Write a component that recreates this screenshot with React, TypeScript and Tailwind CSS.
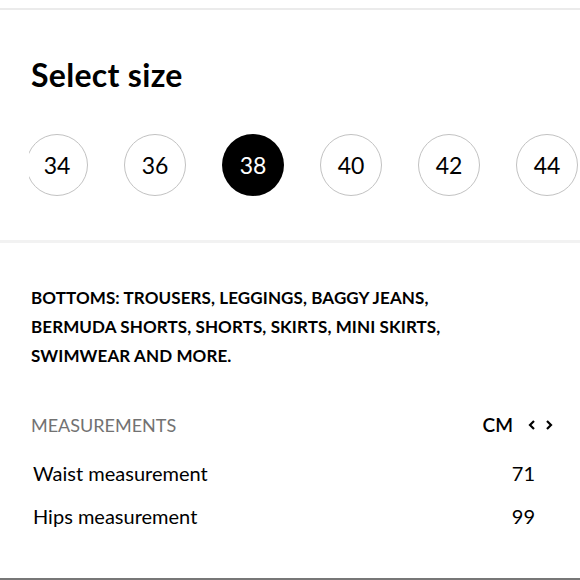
import React, { useState } from 'react';

const sizes = ['34', '36', '38', '40', '42', '44'];

const rows = [
  { label: 'Waist measurement', value: '71' },
  { label: 'Hips measurement', value: '99' },
];

const font = { fontFamily: 'Lato, "Liberation Sans", sans-serif' };

const App: React.FC = () => {
  const [selected, setSelected] = useState('38');

  return (
    <div className="w-[580px] h-[580px] bg-white overflow-hidden flex flex-col text-black" style={font}>
      <div className="h-[8px]" />
      <div className="h-[2px] bg-[#ebebeb]" />

      {/* size picker */}
      <div className="pt-[46px] pb-[44px]">
        <h2 className="pl-[31px] text-[32px] leading-[38px] font-bold tracking-[0.3px]">Select size</h2>
        <div className="mt-[40px] ml-[29px] overflow-hidden">
          <div className="flex gap-[36px] -ml-[3px]">
            {sizes.map((s) => (
              <button
                key={s}
                onClick={() => setSelected(s)}
                className={
                  s === selected
                    ? 'shrink-0 w-[62px] h-[62px] rounded-full bg-black text-white text-[23px] flex items-center justify-center'
                    : 'shrink-0 w-[62px] h-[62px] rounded-full border-[1.5px] border-[#c2c2c2] text-black text-[23px] flex items-center justify-center'
                }
              >
                {s}
              </button>
            ))}
          </div>
        </div>
      </div>

      <div className="h-[3px] bg-[#f2f2f2]" />

      {/* size guide */}
      <div className="flex-1 flex flex-col pl-[31px] pr-[27px] pt-[40px]">
        <p className="text-[17px] leading-[29px] font-bold uppercase tracking-[0.1px]">
          Bottoms: trousers, leggings, baggy jeans,
          <br />
          bermuda shorts, shorts, skirts, mini skirts,
          <br />
          swimwear and more.
        </p>

        <div className="mt-[41px] flex items-center justify-between">
          <span className="text-[18px] text-[#727272]">MEASUREMENTS</span>
          <div className="flex items-center gap-[15px]">
            <span className="text-[19px] font-semibold">CM</span>
            <div className="flex items-center gap-[9px]">
              <svg width="8" height="12" viewBox="0 0 8 12" fill="none">
                <path d="M6 2 L2 6 L6 10" stroke="black" strokeWidth="2.2" />
              </svg>
              <svg width="8" height="12" viewBox="0 0 8 12" fill="none">
                <path d="M2 2 L6 6 L2 10" stroke="black" strokeWidth="2.2" />
              </svg>
            </div>
          </div>
        </div>

        <div className="mt-[21px] flex flex-col gap-[19px] pl-[2px] pr-[18px]">
          {rows.map((r) => (
            <div key={r.label} className="flex items-center justify-between text-[20px] leading-[24px]">
              <span>{r.label}</span>
              <span>{r.value}</span>
            </div>
          ))}
        </div>
      </div>

      <div className="h-[2px] bg-[#777777]" />
    </div>
  );
};

export default App;
